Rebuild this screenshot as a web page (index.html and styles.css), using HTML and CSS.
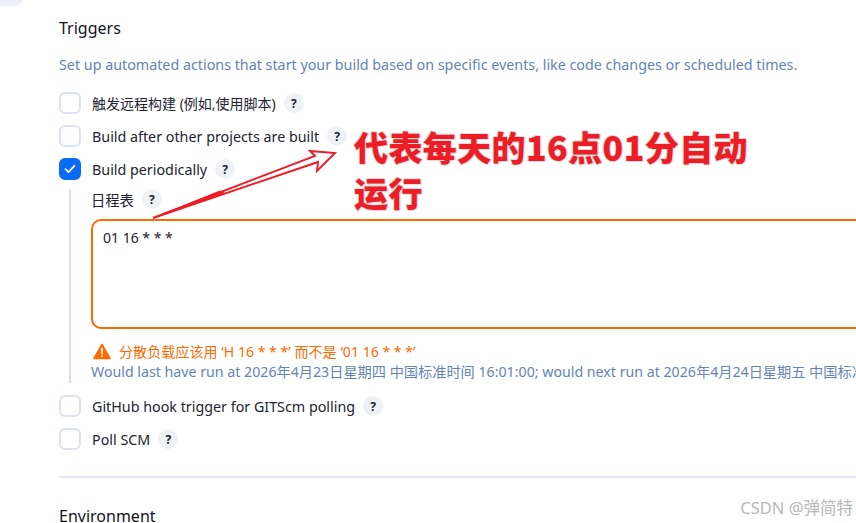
FILE: index.html
```html
<!DOCTYPE html>
<html lang="zh">
<head>
<meta charset="UTF-8" />
<title>Triggers</title>
<link rel="stylesheet" href="styles.css">
</head>
<body>

<div class="corner"></div>

<main class="section">
  <h2 class="title">Triggers</h2>
  <p class="desc">Set up automated actions that start your build based on specific events, like code changes or scheduled times.</p>

  <div class="row row-first">
    <span class="box"></span>
    <span class="label label-cjk">触发远程构建 (例如,使用脚本)</span>
    <span class="help">?</span>
  </div>
  <div class="row">
    <span class="box"></span>
    <span class="label">Build after other projects are built</span>
    <span class="help">?</span>
  </div>
  <div class="row">
    <span class="box checked">
      <svg width="12" height="10" viewBox="0 0 12 10"><path d="M1.5 5.2 4.5 8.2 10.5 1.6" fill="none" stroke="#fff" stroke-width="1.7" stroke-linecap="round" stroke-linejoin="round"/></svg>
    </span>
    <span class="label">Build periodically</span>
    <span class="help">?</span>
  </div>

  <div class="nested">
    <div class="field-label">
      <span class="label">日程表</span>
      <span class="help">?</span>
    </div>
    <div class="textarea">01 16 * * *</div>
    <div class="warning">
      <svg width="18" height="17" viewBox="0 0 18 17"><path d="M9 1.5 17 15.5H1Z" fill="#ff6a00" stroke="#ff6a00" stroke-width="1.6" stroke-linejoin="round"/><path d="M9 5.6V10.6" stroke="#fff" stroke-width="1.7" stroke-linecap="round"/><circle cx="9" cy="13" r="1" fill="#fff"/></svg>
      <span>分散负载应该用 ‘H 16 * * *’ 而不是 ‘01 16 * * *’</span>
    </div>
    <div class="next-run">Would last have run at 2026年4月23日星期四 中国标准时间 16:01:00; would next run at 2026年4月24日星期五 中国标准时间 16:01:00.</div>
  </div>

  <div class="row">
    <span class="box"></span>
    <span class="label">GitHub hook trigger for GITScm polling</span>
    <span class="help">?</span>
  </div>
  <div class="row">
    <span class="box"></span>
    <span class="label">Poll SCM</span>
    <span class="help">?</span>
  </div>

  <hr class="divider">
  <h2 class="title">Environment</h2>
</main>

<!-- annotation drawn on top of the screenshot -->
<svg class="arrow" width="220" height="110" viewBox="0 0 220 110">
  <path d="M3 98 165 36 160 31 185 33 167 51 168 42Z" fill="#fff" stroke="#ee1c25" stroke-width="1.9" stroke-linejoin="miter"/>
  <path d="M3 98 70 71 74 73Z" fill="#ee1c25" stroke="#ee1c25"/>
</svg>
<div class="note">代表每天的16点01分自动<br>运行</div>

<div class="watermark">CSDN @弹简特</div>

</body>
</html>
```

FILE: styles.css
```css
html, body {
  margin: 0;
  height: 523px;
  overflow: hidden;
}
body {
  background: #fff;
  color: #14141f;
  font-family: "Noto Sans", "Noto Sans CJK SC", sans-serif;
  font-size: 14.3px;
  position: relative;
}
.corner {
  position: absolute;
  top: -14px;
  left: -10px;
  width: 34px;
  height: 20px;
  background: #eef0f8;
  border-radius: 10px;
}
.section {
  padding: 17px 0 0 59px;
  width: 1000px;
}
.title {
  margin: 0;
  font-size: 16px;
  font-weight: 400;
  line-height: 22px;
  color: #14141f;
}
.desc {
  margin: 15px 0 0;
  line-height: 22px;
  color: #6484b4;
  white-space: nowrap;
}
.row {
  display: flex;
  align-items: center;
  height: 22px;
  margin-top: 11px;
  white-space: nowrap;
}
.row-first {
  margin-top: 16px;
}
.nested + .row {
  margin-top: 12px;
}
.box {
  box-sizing: border-box;
  width: 22px;
  height: 22px;
  border: 2px solid #dde2f0;
  border-radius: 6px;
  background: #fff;
  margin-right: 11px;
  display: flex;
  align-items: center;
  justify-content: center;
}
.box.checked {
  background: #0a6cf5;
  border-color: #0a6cf5;
}
.label {
  color: #23232f;
}
.label-cjk {
  font-size: 14px;
}
.help {
  width: 20px;
  height: 20px;
  border-radius: 50%;
  background: #eef1f5;
  color: #23232f;
  font-size: 12px;
  font-weight: 700;
  display: flex;
  align-items: center;
  justify-content: center;
  margin-left: 8px;
}
.nested {
  margin: 9px 0 0 10px;
  padding: 0 0 0 20px;
  border-left: 2px solid #d9dfee;
  height: 194px;
}
.field-label {
  display: flex;
  align-items: center;
  height: 20px;
}
.textarea {
  box-sizing: border-box;
  margin: 10px 0 0 0;
  height: 110px;
  padding: 6px 10px;
  border: 2px solid #ff6a00;
  border-radius: 10px;
  color: #23232f;
  font-size: 14px;
  line-height: 22px;
  white-space: pre;
}
.warning {
  display: flex;
  align-items: center;
  gap: 8px;
  margin-top: 13px;
  padding-left: 2px;
  height: 18px;
  color: #ff6a00;
  font-size: 14.1px;
  white-space: nowrap;
}
.next-run {
  margin-top: 2px;
  font-size: 14.2px;
  line-height: 20px;
  color: #6484b4;
  white-space: nowrap;
}
.divider {
  border: 0;
  height: 2px;
  background: #e3e7f3;
  margin: 26px 0 27px;
}
.arrow {
  position: absolute;
  left: 150px;
  top: 120px;
}
.note {
  position: absolute;
  left: 354px;
  top: 124px;
  font-family: "Noto Sans CJK SC", sans-serif;
  font-size: 34px;
  font-weight: 900;
  letter-spacing: 0.4px;
  line-height: 46px;
  color: #ee1c25;
  text-shadow: 1px 0 #dcdcdc, -1px 0 #dcdcdc, 0 1px #dcdcdc, 0 -1px #dcdcdc, 1px 1px #e6e6e6, -1px -1px #e6e6e6;
  white-space: nowrap;
}
.watermark {
  position: absolute;
  right: 3px;
  bottom: 4px;
  font-size: 16.5px;
  color: #b8b8b8;
}
```
